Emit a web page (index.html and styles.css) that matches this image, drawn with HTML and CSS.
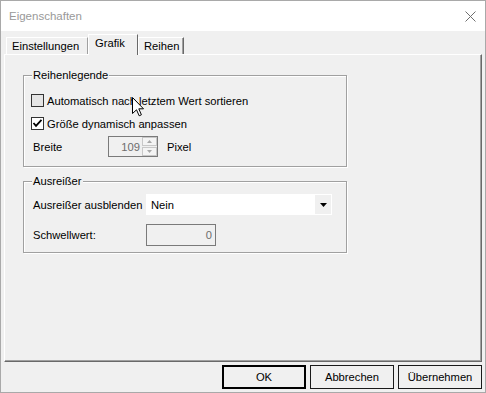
FILE: index.html
```html
<html>
<head>
  <title>Eigenschaften</title>
  <meta charset="utf-8">
  <link rel="stylesheet" href="styles.css">
</head>
<body>
  <div class="window">
    <div class="titlebar">
      <span class="title">Eigenschaften</span>
      <svg class="close" width="11" height="11" viewBox="0 0 11 11">
        <path d="M0.5 0.5 L10.5 10.5 M10.5 0.5 L0.5 10.5" stroke="#6e6e6e" stroke-width="1" fill="none"/>
      </svg>
    </div>
    <div class="client">
      <div class="tabs">
        <div class="tab tab-first">Einstellungen</div>
        <div class="tab active">Grafik</div>
        <div class="tab tab-last">Reihen</div>
      </div>
      <div class="panel">
        <fieldset class="group">
          <legend>Reihenlegende</legend>
          <div class="row">
            <span class="box hover"></span>
            <span>Automatisch nach letztem Wert sortieren</span>
          </div>
          <div class="row">
            <span class="box">
              <svg width="11" height="11" viewBox="0 0 11 11">
                <path d="M1.5 5 L4 7.8 L9.5 1.8" stroke="#000" stroke-width="1.8" fill="none"/>
              </svg>
            </span>
            <span>Größe dynamisch anpassen</span>
          </div>
          <div class="row">
            <span class="lbl lbl-short">Breite</span>
            <div class="spin">
              <span class="value">109</span>
              <div class="arrows">
                <span class="arrow"><svg width="5" height="3" viewBox="0 0 5 3"><path d="M2.5 0 L5 3 L0 3 Z" fill="#a8a8a8"/></svg></span>
                <span class="arrow"><svg width="5" height="3" viewBox="0 0 5 3"><path d="M0 0 L5 0 L2.5 3 Z" fill="#a8a8a8"/></svg></span>
              </div>
            </div>
            <span class="unit">Pixel</span>
          </div>
        </fieldset>
        <fieldset class="group group-second">
          <legend>Ausreißer</legend>
          <div class="row row-tall">
            <span class="lbl lbl-long">Ausreißer ausblenden</span>
            <div class="combo">
              <span class="combo-text">Nein</span>
              <span class="drop">
                <svg width="7" height="4" viewBox="0 0 7 4"><path d="M0 0 L7 0 L3.5 4 Z" fill="#000"/></svg>
              </span>
            </div>
          </div>
          <div class="row row-tall row-gap">
            <span class="lbl lbl-long">Schwellwert:</span>
            <div class="field">0</div>
          </div>
        </fieldset>
      </div>
      <div class="buttons">
        <div class="btn btn-default">OK</div>
        <div class="btn">Abbrechen</div>
        <div class="btn">Übernehmen</div>
      </div>
    </div>
    <svg class="cursor" width="13" height="20" viewBox="0 0 13 20">
      <path d="M0.5 0.5 L0.5 16.5 L4.5 12.8 L7.2 18.8 L9.4 17.8 L6.8 11.8 L11.5 11.8 Z" fill="#fff" stroke="#000" stroke-width="1" stroke-linejoin="miter"/>
    </svg>
  </div>
</body>
</html>
```

FILE: styles.css
```css
body {
  margin: 0;
  font-family: 'Liberation Sans', Arial, sans-serif;
  font-size: 11.2px;
  color: #000000;
  background-color: #f0f0f0;
}
.window {
  position: relative;
  width: 486px;
  height: 393px;
  box-sizing: border-box;
  border: 1px solid #a9a9a9;
  background-color: #f0f0f0;
  display: flex;
  flex-direction: column;
}
.titlebar {
  height: 30px;
  flex: none;
  background-color: #ffffff;
  display: flex;
  align-items: center;
  justify-content: space-between;
  padding: 0 9px 0 8px;
}
.title {
  color: #999999;
  font-size: 11.5px;
}
.close {
  display: block;
}
.client {
  flex: 1;
  padding: 3px 3px 0 3px;
}
.tabs {
  display: flex;
  align-items: flex-end;
  height: 20px;
  padding-left: 2px;
}
.tab {
  height: 17px;
  box-sizing: border-box;
  border-top: 1px solid #ffffff;
  border-left: 1px solid #ffffff;
  border-right: 1px solid #a0a0a0;
  padding-left: 5px;
  line-height: 16px;
}
.tab-first {
  width: 82px;
}
.active {
  width: 50px;
  height: 21px;
  margin-bottom: -1px;
  position: relative;
  z-index: 1;
  background-color: #f0f0f0;
  border-right: 1px solid #696969;
  padding-left: 6px;
  line-height: 17px;
}
.tab-last {
  width: 46px;
  border-right: 1px solid #696969;
  box-shadow: inset -1px 0 0 #a0a0a0;
}
.panel {
  height: 308px;
  box-sizing: border-box;
  border-style: solid;
  border-width: 1px;
  border-color: #ffffff #696969 #696969 #ffffff;
  box-shadow: inset -1px -1px 0 #a0a0a0;
  padding: 0 17px 0 18px;
}
.group {
  width: 324px;
  box-sizing: border-box;
  margin: 13px 0 0;
  padding: 7px 7px 8px 7px;
  border: 1px solid #a0a0a0;
  box-shadow: 1px 1px 0 #ffffff, inset 1px 1px 0 #ffffff;
  min-width: 0;
}
.group-second {
  margin-top: 7px;
  padding-top: 6px;
  padding-bottom: 6px;
}
legend {
  padding: 0 1px;
  margin-left: 1px;
  line-height: 14px;
  background-color: #f0f0f0;
}
.row {
  display: flex;
  align-items: center;
  height: 23px;
}
.row-tall {
  height: 21px;
}
.row-gap {
  height: 22px;
  margin-top: 9px;
}
.box {
  width: 13px;
  height: 13px;
  box-sizing: border-box;
  border: 1px solid #333333;
  background-color: #ffffff;
  margin-right: 3px;
  display: flex;
  align-items: center;
  justify-content: center;
}
.box.hover {
  background-color: #e5e5e5;
}
.box svg {
  display: block;
}
.lbl {
  box-sizing: border-box;
  padding-left: 2px;
  flex: none;
}
.lbl-short {
  width: 77px;
}
.lbl-long {
  width: 115px;
}
.spin {
  width: 50px;
  height: 21px;
  box-sizing: border-box;
  border: 1px solid #7a7a7a;
  display: flex;
  align-items: center;
}
.value {
  flex: 1;
  text-align: right;
  color: #6d6d6d;
  padding-right: 2px;
}
.arrows {
  width: 15px;
  height: 19px;
  display: flex;
  flex-direction: column;
  gap: 1px;
}
.arrow {
  flex: 1;
  box-sizing: border-box;
  border: 1px solid #c8c8c8;
  background-color: #f4f4f4;
  display: flex;
  align-items: center;
  justify-content: center;
}
.arrow svg {
  display: block;
}
.unit {
  margin-left: 9px;
}
.combo {
  width: 186px;
  height: 21px;
  box-sizing: border-box;
  background-color: #ffffff;
  padding: 1px;
  display: flex;
  align-items: center;
}
.combo-text {
  flex: 1;
  padding-left: 4px;
}
.drop {
  width: 16px;
  height: 19px;
  background-color: #f0f0f0;
  display: flex;
  align-items: center;
  justify-content: center;
}
.field {
  width: 70px;
  height: 22px;
  box-sizing: border-box;
  border: 1px solid #7a7a7a;
  background-color: #f0f0f0;
  color: #6d6d6d;
  text-align: right;
  padding-right: 3px;
  line-height: 20px;
}
.buttons {
  display: flex;
  justify-content: flex-end;
  gap: 4px;
  margin-top: 3px;
}
.btn {
  width: 84px;
  height: 24px;
  box-sizing: border-box;
  border: 1px solid #1a1a1a;
  background-color: #f0f0f0;
  display: flex;
  align-items: center;
  justify-content: center;
}
.btn-default {
  border: 2px solid #000000;
}
.cursor {
  position: absolute;
  left: 131px;
  top: 96px;
}
```
